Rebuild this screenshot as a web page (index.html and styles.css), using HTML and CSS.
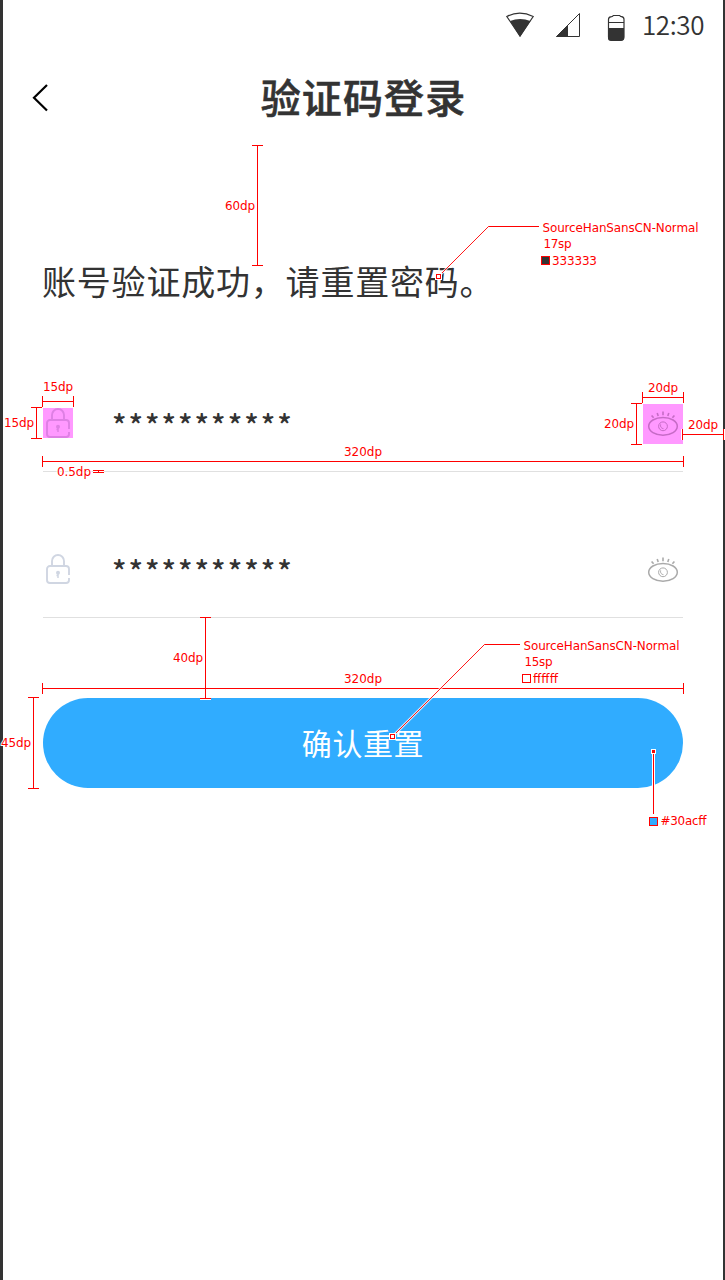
FILE: index.html
```html
<!DOCTYPE html>
<html lang="zh-CN">
<head>
<meta charset="utf-8">
<title>验证码登录</title>
<link rel="stylesheet" href="styles.css">
</head>
<body>
<svg class="defs" width="0" height="0">
  <symbol id="lock" viewBox="0 0 30 30">
    <path d="M26 21V15a3 3 0 0 0-3-3H7a3 3 0 0 0-3 3v11a3 3 0 0 0 3 3h16a3 3 0 0 0 3-3v-2M9 12V7a6 6 0 0 1 12 0v5" fill="none" stroke="currentColor" stroke-width="1.9"/>
    <circle cx="15" cy="18.700" r="2" fill="currentColor"/>
    <path d="M15 19v5M15 21.500h-1.500" stroke="currentColor" stroke-width="1.500"/>
  </symbol>
  <symbol id="eye" viewBox="0 0 40 40">
    <g fill="none" stroke="currentColor">
      <ellipse cx="20" cy="22.300" rx="14.300" ry="8.900" stroke-width="1.500"/>
      <circle cx="20" cy="22.300" r="4.400"/>
      <path d="M17.700 20.300c-.8 2.300.6 4.200 2.800 4.400" stroke-width=".9"/>
      <path d="M20 7.400v3.800M14.200 9l1 3M25.800 9l-1 3M8.600 11.400l2 2.400M31.400 11.400l-2 2.400" stroke-width="1.600"/>
    </g>
  </symbol>
</svg>
<div class="screen">
  <header class="status">
    <svg class="status-icons" width="124" height="30" viewBox="0 0 124 30">
      <path d="M1.800 6.500Q14.500-.3 28.200 6.500L15 26z" fill="none" stroke="#333" stroke-width="1.200"/>
      <path d="M5 11Q15 7 25.500 11L15 27z" fill="#333"/>
      <path d="M51.500 26.500H74.500V3.500z" fill="none" stroke="#333"/>
      <path d="M51 27h12V15z" fill="#333"/>
      <path d="M103.500 27V9.500q0-2.500 3-2.800q1.500-.2 1.700-1.200h6.600q.2 1 1.700 1.200q2.500.3 2.500 2.800V27q0 3-3 3h-9.500q-3 0-3-3z" fill="none" stroke="#333" stroke-width="1.200"/>
      <path d="M103 12.500h16" stroke="#333"/>
      <path d="M103 18h16v10q0 3-3 3h-10q-3 0-3-3z" fill="#333"/>
    </svg>
    <span class="clock">12:30</span>
  </header>
  <nav class="nav">
    <svg class="back" width="18" height="28" viewBox="0 0 18 28"><path d="M16 1L3 13.800 16 26.500" fill="none" stroke="#000" stroke-width="2.200"/></svg>
    <h1 class="title">验证码登录</h1>
  </nav>
  <main class="content">
    <p class="message">账号验证成功，请重置密码。</p>
    <div class="field marked">
      <svg class="lock"><use href="#lock"/></svg>
      <span class="password">***********</span>
      <svg class="eye"><use href="#eye"/></svg>
    </div>
    <div class="field">
      <svg class="lock"><use href="#lock"/></svg>
      <span class="password">***********</span>
      <svg class="eye"><use href="#eye"/></svg>
    </div>
    <button class="submit">确认重置</button>
  </main>
</div>
<svg class="spec" width="725" height="1280" viewBox="0 0 725 1280">
  <defs>
    <g id="rules">
      <path d="M257.500 145v121M252 145.500h11M252 265.500h11"/>
      <path d="M42 401.500h32M42.500 396v11M73.500 396v11"/>
      <path d="M36.500 407v32M31 407.500h11M31 438.500h11"/>
      <path d="M642 397.500h42M642.500 392v11M683.500 392v11"/>
      <path d="M636.500 403v42M631 403.500h11M631 444.500h11"/>
      <path d="M682 434.500h42M682.500 429v11M723.500 429v11"/>
      <path d="M42 461.500h642M42.500 456v11M683.500 456v11"/>
      <path d="M93 470.500h11M93 472.500h11M98.500 470v3"/>
      <path d="M42 688.500h642M42.500 683v11M683.500 683v11"/>
      <path d="M205.500 617v82M200 617.500h11M200 698.500h11"/>
      <path d="M33.500 697v92M28 697.500h11M28 788.500h11"/>
      <path d="M653.500 751v63M488 226.500h51M484 644.500h36"/>
    </g>
  </defs>
  <use href="#rules" class="halo"/>
  <use href="#rules" class="rule"/>
  <path class="lead-halo" d="M440 275L488.500 226.500M394 735L484.500 644.500"/>
  <path class="lead" d="M440 275L488.500 226.500M394 735L484.500 644.500"/>
  <g class="pin">
    <path class="pin-halo" d="M435 273h7v7h-7zM389 733h7v7h-7zM651 749h5v5h-5z"/>
    <path d="M436.500 274.500h4v4h-4zM390.500 734.500h4v4h-4z"/>
    <path class="dot" d="M652.500 750.500h2v2h-2z"/>
    <path class="dark" d="M541.500 256.500h8v8h-8z"/>
    <path d="M522.500 674.500h8v8h-8z"/>
    <path class="blue" d="M649.500 817.500h8v8h-8z"/>
  </g>
  <g class="label">
    <text x="225" y="210" textLength="30">60dp</text>
    <text x="43" y="391" textLength="30">15dp</text>
    <text x="4" y="427" textLength="30">15dp</text>
    <text x="648" y="392" textLength="30">20dp</text>
    <text x="604" y="428" textLength="30">20dp</text>
    <text x="688" y="429" textLength="30">20dp</text>
    <text x="344" y="456" textLength="38">320dp</text>
    <text x="57" y="476" textLength="34">0.5dp</text>
    <text x="173" y="662" textLength="30">40dp</text>
    <text x="344" y="683" textLength="38">320dp</text>
    <text x="1" y="747" textLength="30">45dp</text>
    <text x="542.500" y="232" textLength="156">SourceHanSansCN-Normal</text>
    <text x="543.500" y="248" textLength="28">17sp</text>
    <text x="552" y="265" textLength="45">333333</text>
    <text x="523.500" y="650" textLength="156">SourceHanSansCN-Normal</text>
    <text x="524.500" y="666" textLength="28">15sp</text>
    <text x="533" y="683" textLength="25">ffffff</text>
    <text x="660.500" y="825" textLength="46">#30acff</text>
  </g>
</svg>
</body>
</html>
```
FILE: styles.css
```css
* { box-sizing: border-box; }
body {
  margin: 0;
  position: relative;
  background: #fff;
  color: #333;
  font-family: "Noto Sans CJK SC", sans-serif;
}
.defs { position: absolute; }
.screen {
  height: 1280px;
  border-left: 3px solid #333;
  border-right: 2px solid #333;
  overflow: hidden;
}
.status {
  height: 50px;
  display: flex;
  justify-content: flex-end;
  align-items: flex-start;
  gap: 13px;
  padding: 10px 18px 0 0;
}
.status-icons { overflow: visible; }
.clock {
  width: 63px;
  font-size: 26px;
  font-weight: 350;
  line-height: 28px;
  letter-spacing: -.4px;
  white-space: nowrap;
}
.nav {
  height: 95px;
  display: grid;
  grid-template-columns: 60px 1fr 60px;
  align-items: start;
  padding-top: 15px;
}
.back { margin: 19px 0 0 28px; }
.title {
  margin: 0;
  padding-left: 1px;
  text-align: center;
  font-size: 40px;
  font-weight: 500;
  line-height: 63px;
  letter-spacing: 1.100px;
  -webkit-text-stroke: .6px #333;
}
.content { padding: 0 40px; }
.message {
  margin: 0 0 0 -1px;
  padding-top: 106px;
  height: 181px;
  font-size: 34px;
  font-weight: 400;
  line-height: 60px;
  letter-spacing: .8px;
  white-space: nowrap;
}
.field {
  height: 146px;
  display: grid;
  grid-template-columns: 69px 1fr 40px;
  align-items: start;
  padding-top: 78px;
  border-bottom: 1px solid #e0e0e0;
}
.lock { width: 30px; height: 30px; margin-top: 4px; color: #d0d6e2; }
.eye { width: 40px; height: 40px; color: #aaa; }
.marked .lock { background: #f9f; color: #de80e4; }
.marked .eye { background: #f9f; color: #c66bc6; }
.password {
  font-size: 30px;
  font-weight: 500;
  line-height: 40px;
  letter-spacing: 2px;
}
.submit {
  display: block;
  width: 640px;
  height: 90px;
  margin-top: 80px;
  padding: 0 0 3px;
  border: 0;
  border-radius: 45px;
  background: #30acff;
  color: #fff;
  font: 400 30px "Noto Sans CJK SC", sans-serif;
  letter-spacing: .6px;
}
.spec { position: absolute; left: 0; top: 0; shape-rendering: crispEdges; }
.halo { fill: none; stroke: #fff; stroke-width: 3; }
.rule { fill: none; stroke: #f00; stroke-width: 1; }
.lead-halo { stroke: #fff; stroke-width: 2.500; stroke-opacity: .75; fill: none; shape-rendering: auto; }
.lead { stroke: #f00; stroke-width: .9; fill: none; shape-rendering: auto; }
.pin { fill: #fff; stroke: #f00; }
.pin-halo { stroke: none; }
.dot { fill: #933; }
.dark { fill: #333; }
.blue { fill: #30acff; }
.label {
  fill: #f00;
  stroke: #fff;
  stroke-width: 2px;
  paint-order: stroke;
  font: 12px "DejaVu Sans", sans-serif;
}
```
